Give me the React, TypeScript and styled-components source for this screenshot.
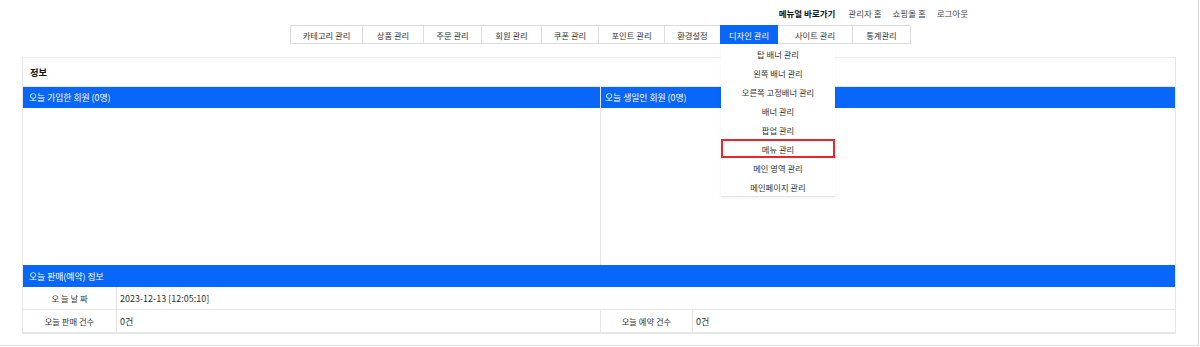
import React from "react";
import styled, { createGlobalStyle } from "styled-components";

const Global = createGlobalStyle`
  html, body { margin: 0; padding: 0; background: #fff; }
  body { font-family: "Noto Sans CJK KR", "Noto Sans", sans-serif; color: #333; }
  * { box-sizing: border-box; }
`;

const BLUE = "#0866f8";
const LINE = "#e6e6e6";

const Page = styled.div`
  width: 1199px;
  height: 346px;
  border-right: 1px solid #d6d6d6;
  border-bottom: 1px solid #e2e2e2;
  position: relative;
`;

const TopLinks = styled.div`
  height: 25px;
  display: flex;
  justify-content: flex-end;
  align-items: center;
  gap: 11px;
  padding-right: 230px;
  font-size: 8.5px;
`;

const TopLink = styled.span<{ $strong?: boolean }>`
  color: ${(p) => (p.$strong ? "#111" : "#444")};
  font-weight: ${(p) => (p.$strong ? 700 : 400)};
  margin-right: ${(p) => (p.$strong ? "2px" : "0")};
`;

const Tabs = styled.nav`
  display: flex;
  justify-content: center;
  height: 19px;
  padding-left: 4px;
`;

const Tab = styled.div<{ $w: number; $active?: boolean }>`
  position: relative;
  width: ${(p) => p.$w}px;
  height: 19px;
  display: flex;
  align-items: center;
  justify-content: center;
  font-size: 8.3px;
  color: ${(p) => (p.$active ? "#fff" : "#333")};
  background: ${(p) => (p.$active ? BLUE : "#fff")};
  border: 1px solid ${(p) => (p.$active ? BLUE : "#dcdcdc")};
  margin-left: -1px;
  white-space: nowrap;
  z-index: ${(p) => (p.$active ? 2 : 1)};
`;

const Dropdown = styled.ul`
  position: absolute;
  top: 18px;
  left: 0;
  width: 114px;
  margin: 0;
  padding: 0;
  list-style: none;
  background: #fff;
  border-bottom: 1px solid #e4e4e4;
  box-shadow: 0 1px 3px rgba(0, 0, 0, 0.06);
  z-index: 10;
`;

const DropItem = styled.li<{ $marked?: boolean }>`
  height: 19px;
  display: flex;
  align-items: center;
  justify-content: center;
  font-size: 8.3px;
  color: #333;
  outline: ${(p) => (p.$marked ? "2px solid #e8262c" : "none")};
  outline-offset: -2px;
`;

const Main = styled.main`
  padding: 13px 22px 0;
`;

const Panel = styled.section`
  border: 1px solid ${LINE};
  border-top-color: #eee;
`;

const PanelTitle = styled.h2`
  margin: 0;
  height: 29px;
  display: flex;
  align-items: center;
  padding-left: 7px;
  font-size: 9.3px;
  font-weight: 700;
  color: #111;
  border-bottom: 1px solid ${LINE};
`;

const Columns = styled.div`
  display: grid;
  grid-template-columns: 577px 1fr;
`;

const Column = styled.div<{ $divider?: boolean }>`
  border-left: ${(p) => (p.$divider ? `1px solid ${LINE}` : "none")};
  display: flex;
  flex-direction: column;
`;

const BlueHead = styled.div<{ $h?: number; $pad?: number }>`
  height: ${(p) => p.$h ?? 21}px;
  background: ${BLUE};
  color: #fff;
  font-size: 8.8px;
  display: flex;
  align-items: center;
  padding-left: ${(p) => p.$pad ?? 6}px;
`;

const ColumnBody = styled.div`
  height: 157px;
`;

const InfoGrid = styled.div`
  display: grid;
  grid-template-columns: 94px 484px 92px 1fr;
`;

const Cell = styled.div<{ $label?: boolean; $span?: number; $h?: number; $divider?: boolean }>`
  grid-column: span ${(p) => p.$span ?? 1};
  height: ${(p) => p.$h ?? 23}px;
  display: flex;
  align-items: center;
  justify-content: ${(p) => (p.$label ? "center" : "flex-start")};
  padding-left: ${(p) => (p.$label ? "0" : "3px")};
  font-size: ${(p) => (p.$label ? "8.3px" : "9px")};
  color: #333;
  border-bottom: 1px solid ${LINE};
  border-right: ${(p) => (p.$divider ? `1px solid ${LINE}` : "none")};
`;

const tabs: { label: string; w: number; active?: boolean }[] = [
  { label: "카테고리 관리", w: 73 },
  { label: "상품 관리", w: 62 },
  { label: "주문 관리", w: 59 },
  { label: "회원 관리", w: 61 },
  { label: "쿠폰 관리", w: 58 },
  { label: "포인트 관리", w: 67 },
  { label: "환경설정", w: 57 },
  { label: "디자인 관리", w: 58, active: true },
  { label: "사이트 관리", w: 76 },
  { label: "통계관리", w: 59 },
];

const designMenu = [
  "탑 배너 관리",
  "왼쪽 배너 관리",
  "오른쪽 고정배너 관리",
  "배너 관리",
  "팝업 관리",
  "메뉴 관리",
  "메인 영역 관리",
  "메인페이지 관리",
];

export default function App() {
  return (
    <>
      <Global />
      <Page>
        <TopLinks>
          <TopLink $strong>메뉴얼 바로가기</TopLink>
          <TopLink>관리자 홈</TopLink>
          <TopLink>쇼핑몰 홈</TopLink>
          <TopLink>로그아웃</TopLink>
        </TopLinks>
        <Tabs>
          {tabs.map((t) => (
            <Tab key={t.label} $w={t.w} $active={t.active}>
              {t.label}
              {t.active && (
                <Dropdown>
                  {designMenu.map((m) => (
                    <DropItem key={m} $marked={m === "메뉴 관리"}>
                      {m}
                    </DropItem>
                  ))}
                </Dropdown>
              )}
            </Tab>
          ))}
        </Tabs>
        <Main>
          <Panel>
            <PanelTitle>정보</PanelTitle>
            <Columns>
              <Column>
                <BlueHead>오늘 가입한 회원 (0명)</BlueHead>
                <ColumnBody />
              </Column>
              <Column $divider>
                <BlueHead $pad={4}>오늘 생일인 회원 (0명)</BlueHead>
                <ColumnBody />
              </Column>
            </Columns>
            <BlueHead $h={22}>오늘 판매(예약) 정보</BlueHead>
            <InfoGrid>
              <Cell $label $divider>오 늘 날 짜</Cell>
              <Cell $span={3}>2023-12-13 [12:05:10]</Cell>
              <Cell $label $divider>오늘 판매 건수</Cell>
              <Cell $divider>0건</Cell>
              <Cell $label $divider>오늘 예약 건수</Cell>
              <Cell>0건</Cell>
            </InfoGrid>
          </Panel>
        </Main>
      </Page>
    </>
  );
}
